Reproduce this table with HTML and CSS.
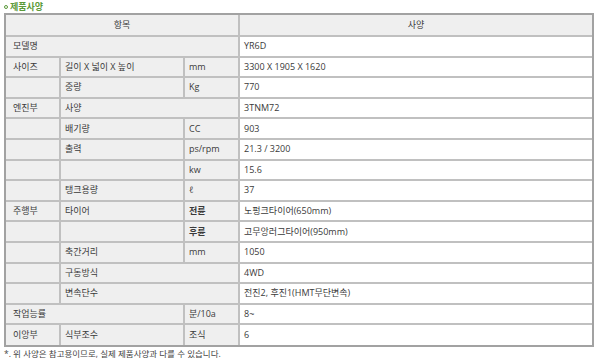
FILE: index.html
```html
<!DOCTYPE html>
<html lang="ko">
<head>
<meta charset="utf-8">
<title>제품사양</title>
<link rel="stylesheet" href="styles.css">
</head>
<body>
<div class="page">
  <h2 class="title"><span class="bullet"></span>제품사양</h2>
  <table class="spec">
    <colgroup>
      <col class="w1"><col class="w2"><col class="w3"><col class="w4">
    </colgroup>
    <thead>
      <tr><th colspan="3">항목</th><th>사양</th></tr>
    </thead>
    <tbody>
      <tr><td class="g first" colspan="3">모델명</td><td>YR6D</td></tr>
      <tr><td class="g first">사이즈</td><td class="g">길이 X 넓이 X 높이</td><td class="g">mm</td><td>3300 X 1905 X 1620</td></tr>
      <tr><td class="g first"></td><td class="g">중량</td><td class="g">Kg</td><td>770</td></tr>
      <tr><td class="g first">엔진부</td><td class="g" colspan="2">사양</td><td>3TNM72</td></tr>
      <tr><td class="g first"></td><td class="g">배기량</td><td class="g">CC</td><td>903</td></tr>
      <tr><td class="g first"></td><td class="g">출력</td><td class="g">ps/rpm</td><td>21.3 / 3200</td></tr>
      <tr><td class="g first"></td><td class="g"></td><td class="g">kw</td><td>15.6</td></tr>
      <tr><td class="g first"></td><td class="g">탱크용량</td><td class="g">ℓ</td><td>37</td></tr>
      <tr><td class="g first">주행부</td><td class="g">타이어</td><td class="g b">전륜</td><td>노펑크타이어(650mm)</td></tr>
      <tr><td class="g first"></td><td class="g"></td><td class="g b">후륜</td><td>고무앙러그타이어(950mm)</td></tr>
      <tr><td class="g first"></td><td class="g">축간거리</td><td class="g">mm</td><td>1050</td></tr>
      <tr><td class="g first"></td><td class="g" colspan="2">구동방식</td><td>4WD</td></tr>
      <tr><td class="g first"></td><td class="g" colspan="2">변속단수</td><td>전진2, 후진1(HMT무단변속)</td></tr>
      <tr><td class="g first" colspan="2">작업능률</td><td class="g">분/10a</td><td>8~</td></tr>
      <tr><td class="g first">이앙부</td><td class="g">식부조수</td><td class="g">조식</td><td>6</td></tr>
    </tbody>
  </table>
  <p class="note">*. 위 사양은 참고용이므로, 실제 제품사양과 다를 수 있습니다.</p>
</div>
</body>
</html>
```
FILE: styles.css
```css
* {
  box-sizing: border-box;
}

html, body {
  margin: 0;
  padding: 0;
  background: #ffffff;
}

body {
  font-family: "Open Sans", "Noto Sans CJK KR", sans-serif;
  font-size: 9px;
  color: #3a3a3a;
}

.page {
  padding: 1px 0 0 4px;
}

.title {
  margin: 0;
  height: 12px;
  display: flex;
  align-items: center;
  gap: 2px;
  font-size: 9px;
  line-height: 12px;
  font-weight: bold;
  color: #5b9a3a;
}

.bullet {
  width: 4px;
  height: 4px;
  border: 1px solid #5b9a3a;
  border-radius: 50%;
}

.spec {
  border-collapse: separate;
  border-spacing: 0;
  table-layout: fixed;
  width: 586px;
  border: 2px solid #a2a2a2;
}

.w1 { width: 55px; }
.w2 { width: 124px; }
.w3 { width: 55px; }
.w4 { width: 352px; }

.spec th,
.spec td {
  border-right: 2px solid #c0c0c0;
  border-bottom: 2px solid #c0c0c0;
  padding: 0 4px;
  height: 20.6px;
  line-height: 12px;
  text-align: left;
  vertical-align: middle;
  font-weight: normal;
  white-space: nowrap;
}

.spec th:last-child,
.spec td:last-child {
  border-right: 0;
}

.spec tbody tr:last-child td {
  border-bottom: 0;
  height: 19.6px;
}

.spec th {
  height: 22px;
  text-align: center;
  background: #efefef;
}

.spec .g {
  background: #efefef;
}

.spec .first {
  padding-left: 7px;
}

.spec .b {
  font-weight: bold;
}

.note {
  margin: 2px 0 0;
  font-size: 8.5px;
  line-height: 10px;
  color: #444;
}
```
